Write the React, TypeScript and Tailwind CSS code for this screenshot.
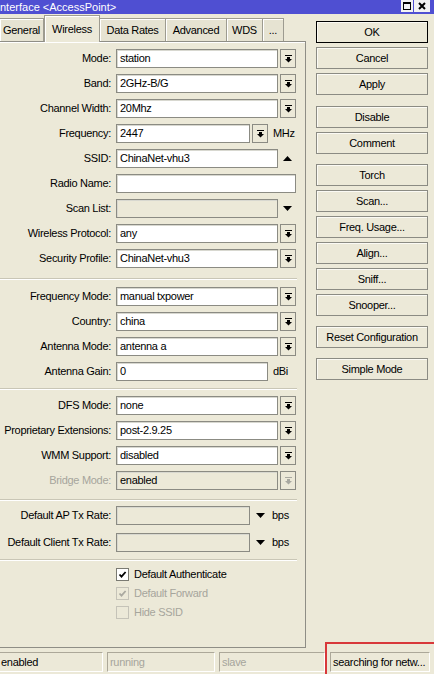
import type { ReactNode } from 'react';

const FONT = { fontFamily: '"Liberation Sans", Arial, sans-serif' };

const DropIcon = ({ muted }: { muted?: boolean }) => (
  <svg width="7" height="8" viewBox="0 0 7 8" fill={muted ? '#a8a8a0' : '#000'}>
    <rect x="0" y="0" width="7" height="1" />
    <rect x="2" y="2" width="3" height="2" />
    <path d="M0 4h7L3.5 7.5z" />
  </svg>
);

const Triangle = ({ up }: { up?: boolean }) => (
  <svg width="9" height="5" viewBox="0 0 9 5">
    <path d={up ? 'M0 5h9L4.5 0z' : 'M0 0h9L4.5 5z'} fill="#000" />
  </svg>
);

const Box = ({ value, disabled, width }: { value?: string; disabled?: boolean; width: string }) => (
  <div
    className={`${width} h-[19px] flex items-center px-[3px] border border-[#8b8b83] shadow-[inset_1px_1px_0_#d8d8d0] ${
      disabled ? 'bg-[#ece9d8]' : 'bg-white'
    }`}
  >
    {value}
  </div>
);

const DropBtn = ({ muted }: { muted?: boolean }) => (
  <div className="w-[16px] h-[19px] ml-[2px] flex items-center justify-center border border-[#8b8b83] bg-[#ece9d8]">
    <DropIcon muted={muted} />
  </div>
);

const Row = ({ label, muted, children }: { label: string; muted?: boolean; children: ReactNode }) => (
  <div className="flex items-center h-[19px]">
    <div className={`w-[111px] shrink-0 text-right whitespace-nowrap ${muted ? 'text-[#a6a59c]' : ''}`}>
      {label}
    </div>
    <div className="ml-[5px] flex items-center">{children}</div>
  </div>
);

const Combo = ({ label, value, muted }: { label: string; value: string; muted?: boolean }) => (
  <Row label={label} muted={muted}>
    <Box value={value} width="w-[162px]" disabled={muted} />
    <DropBtn muted={muted} />
  </Row>
);

const Sep = ({ top, bottom }: { top: string; bottom: string }) => (
  <div className={`${top} ${bottom} w-[297px] h-[2px] border-t border-[#c9c6b6] border-b border-b-white`} />
);

const Check = ({ label, checked, muted }: { label: string; checked?: boolean; muted?: boolean }) => (
  <div className="flex items-center h-[19px] pl-[116px]">
    <div
      className={`w-[13px] h-[13px] flex items-center justify-center border ${
        muted ? 'border-[#c5c3b8] bg-[#ece9d8]' : 'border-[#7a7a72] bg-white'
      }`}
    >
      {checked && (
        <svg width="9" height="9" viewBox="0 0 9 9">
          <path d="M1.5 4.5l2 2.2L7.6 2" fill="none" stroke={muted ? '#aaa9a0' : '#000'} strokeWidth="1.8" />
        </svg>
      )}
    </div>
    <span className={`ml-[5px] ${muted ? 'text-[#a6a59c]' : ''}`}>{label}</span>
  </div>
);

const Btn = ({ label, main }: { label: string; main?: boolean }) => (
  <div
    className={`w-[112px] h-[22px] flex items-center justify-center bg-[#ece9d8] border shadow-[inset_1px_1px_0_#fbfaf4] ${
      main ? 'border-black' : 'border-[#8b8b83]'
    }`}
  >
    {label}
  </div>
);

const tabs = [
  { name: 'General', w: 'w-[44px]' },
  { name: 'Wireless', w: 'w-[56px]', active: true },
  { name: 'Data Rates', w: 'w-[66px]' },
  { name: 'Advanced', w: 'w-[61px]' },
  { name: 'WDS', w: 'w-[36px]' },
  { name: '...', w: 'w-[21px]' },
];

export default function App() {
  return (
    <div
      style={FONT}
      className="relative w-[434px] h-[674px] overflow-hidden bg-[#ece9d8] text-[11px] tracking-[-0.3px] text-black flex flex-col"
    >
      {/* title bar */}
      <div className="h-[14px] shrink-0 bg-[#4f4fd2] flex items-center justify-between">
        <span className="text-white text-[11px] tracking-normal leading-none whitespace-nowrap">
          nterface &lt;AccessPoint&gt;
        </span>
        <div className="flex items-start self-start mr-[4px] gap-[1px]">
          <div className="w-[12px] h-[12px] bg-[#f2f2f2] flex items-center justify-center">
            <div className="w-[8px] h-[8px] border border-black border-t-2" />
          </div>
          <div className="w-[16px] h-[12px] bg-[#f2f2f2] flex items-center justify-center">
            <svg width="8" height="8" viewBox="0 0 8 8">
              <path d="M1 1l6 6M7 1L1 7" stroke="#000" strokeWidth="2" />
            </svg>
          </div>
        </div>
      </div>

      <div className="flex-1 flex min-h-0 pt-[1px]">
        {/* tab widget */}
        <div className="w-[306px] flex flex-col">
          <div className="h-[26px] flex items-end shrink-0">
            {tabs.map((t) => (
              <div
                key={t.name}
                className={`${t.w} shrink-0 flex items-center justify-center border-t border-r border-[#9d9b90] shadow-[inset_1px_1px_0_#fff] ${
                  t.active ? 'h-[27px] -mb-[1px] relative z-10 bg-[#ece9d8] border-l' : 'h-[23px] bg-[#e6e3d2]'
                }`}
              >
                {t.name}
              </div>
            ))}
          </div>
          <div className="flex-1 border-t border-r border-b border-[#8f8e86] shadow-[inset_0_1px_0_#fff] pt-[7px] flex flex-col">
            <div className="flex flex-col gap-[6px]">
              <Combo label="Mode:" value="station" />
              <Combo label="Band:" value="2GHz-B/G" />
              <Combo label="Channel Width:" value="20Mhz" />
              <Row label="Frequency:">
                <Box value="2447" width="w-[134px]" />
                <DropBtn />
                <span className="ml-[5px]">MHz</span>
              </Row>
              <Row label="SSID:">
                <Box value="ChinaNet-vhu3" width="w-[162px]" />
                <div className="w-[18px] flex justify-center">
                  <Triangle up />
                </div>
              </Row>
              <Row label="Radio Name:">
                <Box width="w-[180px]" />
              </Row>
              <Row label="Scan List:">
                <Box width="w-[162px]" disabled />
                <div className="w-[18px] flex justify-center">
                  <Triangle />
                </div>
              </Row>
              <Combo label="Wireless Protocol:" value="any" />
              <Combo label="Security Profile:" value="ChinaNet-vhu3" />
            </div>
            <Sep top="mt-[10px]" bottom="mb-[7px]" />
            <div className="flex flex-col gap-[6px]">
              <Combo label="Frequency Mode:" value="manual txpower" />
              <Combo label="Country:" value="china" />
              <Combo label="Antenna Mode:" value="antenna a" />
              <Row label="Antenna Gain:">
                <Box value="0" width="w-[152px]" />
                <span className="ml-[5px]">dBi</span>
              </Row>
            </div>
            <Sep top="mt-[7px]" bottom="mb-[6px]" />
            <div className="flex flex-col gap-[6px]">
              <Combo label="DFS Mode:" value="none" />
              <Combo label="Proprietary Extensions:" value="post-2.9.25" />
              <Combo label="WMM Support:" value="disabled" />
              <Combo label="Bridge Mode:" value="enabled" muted />
            </div>
            <Sep top="mt-[9px]" bottom="mb-[5px]" />
            <div className="flex flex-col gap-[8px]">
              {['Default AP Tx Rate:', 'Default Client Tx Rate:'].map((l) => (
                <Row key={l} label={l}>
                  <Box width="w-[134px]" disabled />
                  <div className="w-[14px] ml-[3px] flex justify-center">
                    <Triangle />
                  </div>
                  <span className="ml-[5px]">bps</span>
                </Row>
              ))}
            </div>
            <Sep top="mt-[7px]" bottom="mb-[4px]" />
            <Check label="Default Authenticate" checked />
            <Check label="Default Forward" checked muted />
            <Check label="Hide SSID" muted />
          </div>
        </div>

        {/* buttons */}
        <div className="ml-[10px] pt-[6px] flex flex-col">
          <div className="flex flex-col gap-[4px]">
            <Btn label="OK" main />
            <Btn label="Cancel" />
            <Btn label="Apply" />
          </div>
          <div className="mt-[11px] flex flex-col gap-[4px]">
            <Btn label="Disable" />
            <Btn label="Comment" />
          </div>
          <div className="mt-[10px] flex flex-col gap-[4px]">
            <Btn label="Torch" />
            <Btn label="Scan..." />
            <Btn label="Freq. Usage..." />
            <Btn label="Align..." />
            <Btn label="Sniff..." />
            <Btn label="Snooper..." />
          </div>
          <div className="mt-[10px]">
            <Btn label="Reset Configuration" />
          </div>
          <div className="mt-[10px]">
            <Btn label="Simple Mode" />
          </div>
        </div>
      </div>

      {/* status bar */}
      <div className="h-[20px] mt-[4px] mb-[2px] shrink-0 flex">
        <div className="w-[103px] flex items-center pl-[1px] border-t border-r border-b border-t-[#aca899] border-r-white border-b-white">
          enabled
        </div>
        <div className="w-[108px] ml-[4px] flex items-center pl-[2px] text-[#a6a59c] border border-t-[#aca899] border-l-[#aca899] border-r-white border-b-white">
          running
        </div>
        <div className="w-[106px] ml-[4px] flex items-center pl-[2px] text-[#a6a59c] border border-t-[#aca899] border-l-[#aca899] border-r-white border-b-white">
          slave
        </div>
        <div className="w-[100px] ml-[5px] flex items-center pl-[2px] whitespace-nowrap border border-t-[#aca899] border-l-[#aca899] border-r-white border-b-white">
          searching for netw...
        </div>
      </div>

      {/* annotation box */}
      <div className="absolute left-[325px] top-[642px] w-[130px] h-[60px] border-2 border-[#d8383a]" />
    </div>
  );
}
